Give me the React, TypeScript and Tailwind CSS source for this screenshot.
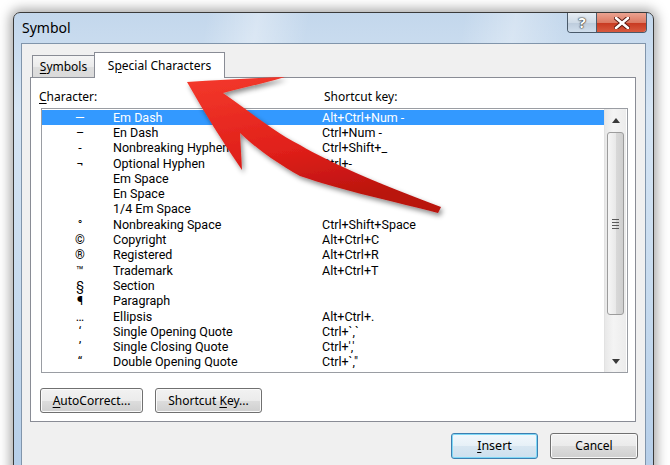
import React from "react";

type Row = { sym: string; name: string; key: string };

const rows: Row[] = [
  { sym: "—", name: "Em Dash", key: "Alt+Ctrl+Num -" },
  { sym: "–", name: "En Dash", key: "Ctrl+Num -" },
  { sym: "-", name: "Nonbreaking Hyphen", key: "Ctrl+Shift+_" },
  { sym: "¬", name: "Optional Hyphen", key: "Ctrl+-" },
  { sym: "", name: "Em Space", key: "" },
  { sym: "", name: "En Space", key: "" },
  { sym: "", name: "1/4 Em Space", key: "" },
  { sym: "°", name: "Nonbreaking Space", key: "Ctrl+Shift+Space" },
  { sym: "©", name: "Copyright", key: "Alt+Ctrl+C" },
  { sym: "®", name: "Registered", key: "Alt+Ctrl+R" },
  { sym: "™", name: "Trademark", key: "Alt+Ctrl+T" },
  { sym: "§", name: "Section", key: "" },
  { sym: "¶", name: "Paragraph", key: "" },
  { sym: "…", name: "Ellipsis", key: "Alt+Ctrl+." },
  { sym: "‘", name: "Single Opening Quote", key: "Ctrl+`,`" },
  { sym: "’", name: "Single Closing Quote", key: "Ctrl+','" },
  { sym: "“", name: "Double Opening Quote", key: "Ctrl+`,\"" },
];

const btn =
  "h-[25px] rounded-[3px] border border-[#707070] bg-[linear-gradient(to_bottom,#f2f2f2_0%,#ebebeb_50%,#dddddd_51%,#cfcfcf_100%)] shadow-[inset_0_0_0_1px_#fafafa] text-[12px] text-black flex items-center justify-center";

function Arrow({ up }: { up?: boolean }) {
  return (
    <svg width="8" height="5" viewBox="0 0 8 5">
      <path d={up ? "M0 5 L4 0 L8 5 Z" : "M0 0 L4 5 L8 0 Z"} fill="#3a3a3a" />
    </svg>
  );
}

function Scrollbar() {
  return (
    <div className="w-[22px] h-full flex flex-col items-center bg-[linear-gradient(to_right,#e8e8e8,#f4f4f4_40%,#ececec)] border-l border-[#e2e2e2]">
      <div className="h-[22px] w-full flex items-center justify-center">
        <Arrow up />
      </div>
      <div className="mt-[1px] h-[183px] w-[17px] rounded-[3px] border border-[#9c9c9c] bg-[linear-gradient(to_right,#f6f6f6,#e9e9e9_50%,#d9d9d9_51%,#cfcfcf)] flex items-center justify-center">
        <div className="flex flex-col gap-[2px]">
          <div className="w-[7px] h-[1px] bg-[#5a5a5a]" />
          <div className="w-[7px] h-[1px] bg-[#5a5a5a]" />
          <div className="w-[7px] h-[1px] bg-[#5a5a5a]" />
          <div className="w-[7px] h-[1px] bg-[#5a5a5a]" />
        </div>
      </div>
      <div className="flex-1" />
      <div className="h-[22px] w-full flex items-center justify-center">
        <Arrow />
      </div>
    </div>
  );
}

function RedArrow() {
  return (
    <svg
      className="absolute top-0 left-0 pointer-events-none"
      width="670"
      height="465"
      viewBox="0 0 670 465"
    >
      <defs>
        <linearGradient id="red" x1="0" y1="0" x2="0.3" y2="1">
          <stop offset="0" stopColor="#f4392c" />
          <stop offset="0.6" stopColor="#e0201a" />
          <stop offset="1" stopColor="#b9120e" />
        </linearGradient>
        <filter id="sh" x="-20%" y="-20%" width="140%" height="140%">
          <feDropShadow dx="2" dy="3" stdDeviation="2.5" floodColor="#000" floodOpacity="0.45" />
        </filter>
      </defs>
      <path
        filter="url(#sh)"
        fill="url(#red)"
        d="M187,82 C220,80 255,78 285,77 C265,83 242,88 223,93 C250,112 275,132 300,145 C330,163 385,186 441,207 L438,213 C400,203 340,190 300,176 C280,165 258,150 240,133 L242,170 Q213,128 187,82 Z"
      />
    </svg>
  );
}

export default function App() {
  return (
    <div className="relative w-[670px] h-[465px] bg-white overflow-hidden font-['Noto_Sans','Liberation_Sans',sans-serif] text-black">
      <div className="ml-[13px] mt-[12px] w-[641px] h-[480px] rounded-t-[7px] border border-[#3a3a3a] bg-[linear-gradient(to_bottom,#c3d7ec,#d6e5f4_20%,#c6daee_60%,#b4cde8)] shadow-[0_0_12px_3px_rgba(0,0,0,0.35)] flex flex-col">
        {/* title bar */}
        <div className="h-[30px] flex justify-between bg-[linear-gradient(100deg,rgba(255,255,255,0)_30%,rgba(255,255,255,0.35)_38%,rgba(255,255,255,0)_46%,rgba(255,255,255,0)_70%,rgba(255,255,255,0.3)_78%,rgba(255,255,255,0)_86%)] rounded-t-[6px]">
          <div className="pl-[8px] pt-[5px] text-[14px] leading-[20px]">Symbol</div>
          <div className="flex mr-[6px] h-[20px] border border-t-0 border-[#4a5a6a] rounded-b-[4px] overflow-hidden">
            <div className="w-[29px] flex items-center justify-center bg-[linear-gradient(to_bottom,#e6edf4,#cfdbe7_50%,#bccbdb_51%,#d0deec)] border-r border-[#4a5a6a] text-white font-bold text-[15px] leading-none [text-shadow:0_0_1px_#333,0_0_1px_#333,0_0_2px_#333]">
              ?
            </div>
            <div className="w-[49px] flex items-center justify-center bg-[linear-gradient(to_bottom,#eba391,#dc7a63_50%,#c7381f_51%,#d85a3f)]">
              <svg width="16" height="12" viewBox="0 0 16 12">
                <path d="M2 1 L14 11 M14 1 L2 11" stroke="#5a1a12" strokeWidth="4.5" strokeLinecap="round" />
                <path d="M2 1 L14 11 M14 1 L2 11" stroke="#fff" strokeWidth="2.6" strokeLinecap="round" />
              </svg>
            </div>
          </div>
        </div>

        {/* client area */}
        <div className="mx-[7px] flex-1 border border-[#8195ab] bg-[#f0f0f0] flex flex-col">
          {/* tabs */}
          <div className="flex items-end pl-[10px] mt-[8px] h-[25px]">
            <div className="h-[22px] w-[63px] border border-b-0 border-[#898c95] bg-[linear-gradient(to_bottom,#f5f5f5,#ebebeb_50%,#dedede_51%,#dadada)] flex items-center justify-center text-[12px]">
              <span>
                <u className="underline-offset-2">S</u>ymbols
              </span>
            </div>
            <div className="relative z-10 -mb-px h-[26px] w-[131px] -ml-px border border-b-0 border-[#898c95] bg-white flex items-center justify-center text-[12px]">
              <span>
                S<u className="underline-offset-2">p</u>ecial Characters
              </span>
            </div>
          </div>

          {/* tab panel */}
          <div className="ml-[8px] w-[606px] h-[345px] border border-[#898c95] bg-white flex flex-col">
            <div className="flex pl-[8px] pt-[11px] h-[30px] text-[12px] leading-[16px]">
              <div className="w-[285px]">
                <u className="underline-offset-2">C</u>haracter:
              </div>
              <div>Shortcut key:</div>
            </div>
            <div className="ml-[10px] w-[587px] h-[265px] border border-[#9a9da3] flex">
              <div className="w-[562px] pt-[1px] text-[12.5px] font-['Roboto','Noto_Sans',sans-serif]">
                {rows.map((r, i) => (
                  <div
                    key={r.name}
                    className={
                      "flex h-[15.3px] items-center leading-[14px] " +
                      (i === 0 ? "bg-[#3399ff] text-white" : "")
                    }
                  >
                    <span className="w-[71px] pl-[5px] text-center">{r.sym}</span>
                    <span className="w-[209px] whitespace-nowrap">{r.name}</span>
                    <span className="whitespace-nowrap">{r.key}</span>
                  </div>
                ))}
              </div>
              <Scrollbar />
            </div>
            <div className="flex gap-[12px] ml-[9px] mt-[15px]">
              <div className={btn + " w-[103px] h-[24px]"}>
                <span>
                  <u className="underline-offset-2">A</u>utoCorrect...
                </span>
              </div>
              <div className={btn + " w-[107px] h-[24px]"}>
                <span>
                  Shortcut <u className="underline-offset-2">K</u>ey...
                </span>
              </div>
            </div>
          </div>

          {/* dialog buttons */}
          <div className="flex justify-end gap-[12px] pr-[7px] mt-[11px]">
            <div className="w-[87px] h-[26px] rounded-[3px] border border-[#3c7fb1] bg-[linear-gradient(to_bottom,#f2f8fc,#e6f0f7_50%,#d7e6f1_51%,#cde0ee)] shadow-[inset_0_0_0_1px_#7fd8f6] text-[12.5px] flex items-center justify-center">
              <span>
                <u className="underline-offset-2">I</u>nsert
              </span>
            </div>
            <div className={btn + " w-[88px] h-[26px] text-[12.5px]"}>Cancel</div>
          </div>
        </div>
      </div>
      <RedArrow />
    </div>
  );
}
